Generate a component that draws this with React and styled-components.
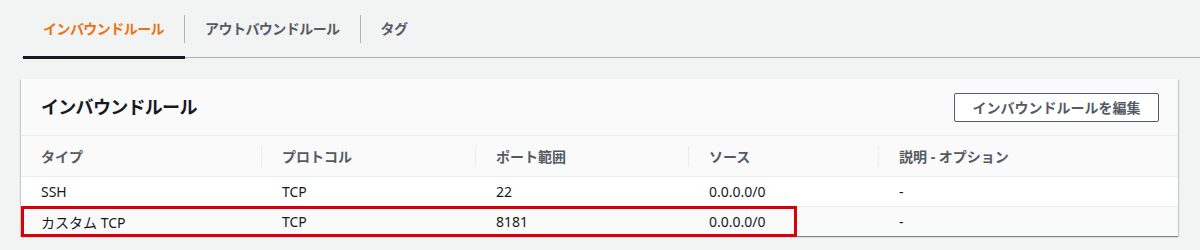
import React from 'react';
import styled, { createGlobalStyle } from 'styled-components';

const GlobalStyle = createGlobalStyle`
  html, body {
    margin: 0;
    padding: 0;
    background: #f2f3f3;
    font-family: "Noto Sans", "Noto Sans CJK JP", sans-serif;
    color: #16191f;
  }
`;

const Page = styled.div`
  width: 1200px;
  height: 250px;
  overflow: hidden;
`;

const TabBar = styled.div`
  display: flex;
  margin-left: 22px;
  padding-left: 1px;
  border-bottom: 1px solid #aab7b8;
`;

const Tab = styled.div`
  position: relative;
  padding: 15px 0 14px;

  &::after {
    content: '';
    display: ${p => (p.active ? 'block' : 'none')};
    position: absolute;
    left: 0;
    right: 0;
    bottom: -2px;
    height: 3px;
    background: #16191f;
  }
`;

const TabLabel = styled.div`
  padding: 0 20px;
  line-height: 28px;
  font-size: 14px;
  font-weight: 700;
  letter-spacing: -0.55px;
  color: ${p => (p.active ? '#ec7211' : '#545b64')};
  border-right: ${p => (p.last ? 'none' : '1px solid #aab7b8')};
`;

const Card = styled.div`
  margin: 21px 22px 0 21px;
  background: #fff;
  box-shadow: 0 1px 1px 0 rgba(0, 28, 36, 0.3), 1px 1px 1px 0 rgba(0, 28, 36, 0.15),
    -1px 1px 1px 0 rgba(0, 28, 36, 0.15);
`;

const CardHeader = styled.div`
  display: flex;
  align-items: center;
  justify-content: space-between;
  height: 56px;
  padding: 0 19px 0 20px;
  background: #fafafa;
  border-bottom: 1px solid #eaeded;
`;

const Title = styled.h2`
  margin: 0 0 3px;
  font-size: 18px;
  font-weight: 700;
  letter-spacing: -0.7px;
  color: #16191f;
`;

const Button = styled.button`
  width: 205px;
  height: 29px;
  padding: 0;
  background: #fff;
  border: 1px solid #545b64;
  border-radius: 2px;
  font-family: inherit;
  font-size: 14px;
  font-weight: 700;
  color: #545b64;
`;

const Row = styled.div`
  display: grid;
  grid-template-columns: 241px 214px 213px 190px 1fr;
  align-items: center;
  height: ${p => (p.head ? '40px' : '29px')};
  background: ${p => (p.head ? '#fafafa' : p.shade ? '#fafafa' : '#fff')};
  border-bottom: ${p => (p.lastRow ? 'none' : '1px solid #eaeded')};
`;

const HeadCell = styled.div`
  padding: 0 20px;
  line-height: 21px;
  font-size: 14px;
  font-weight: 700;
  color: #545b64;
  border-left: ${p => (p.first ? 'none' : '1px solid #eaeded')};
  margin-left: ${p => (p.first ? '0' : '-1px')};
`;

const Cell = styled.div`
  padding: 0 20px;
  font-size: 14px;
  color: #16191f;
`;

const Body = styled.div`
  position: relative;
`;

const Highlight = styled.div`
  position: absolute;
  left: 0;
  top: 29px;
  width: 776px;
  height: 31px;
  box-sizing: border-box;
  border: 3px solid #d9000d;
  pointer-events: none;
`;

const columns = ['タイプ', 'プロトコル', 'ポート範囲', 'ソース', '説明 - オプション'];

const rules = [
  ['SSH', 'TCP', '22', '0.0.0.0/0', '-'],
  ['カスタム TCP', 'TCP', '8181', '0.0.0.0/0', '-'],
];

const tabs = ['インバウンドルール', 'アウトバウンドルール', 'タグ'];

export default function App() {
  return (
    <Page>
      <GlobalStyle />
      <TabBar>
        {tabs.map((t, i) => (
          <Tab key={t} active={i === 0}>
            <TabLabel active={i === 0} last={i === tabs.length - 1}>
              {t}
            </TabLabel>
          </Tab>
        ))}
      </TabBar>
      <Card>
        <CardHeader>
          <Title>インバウンドルール</Title>
          <Button>インバウンドルールを編集</Button>
        </CardHeader>
        <Row head>
          {columns.map((c, i) => (
            <HeadCell key={c} first={i === 0}>
              {c}
            </HeadCell>
          ))}
        </Row>
        <Body>
          {rules.map((r, i) => (
            <Row key={i} shade={i === 1} lastRow={i === rules.length - 1}>
              {r.map((v, j) => (
                <Cell key={j}>{v}</Cell>
              ))}
            </Row>
          ))}
          <Highlight />
        </Body>
      </Card>
    </Page>
  );
}
